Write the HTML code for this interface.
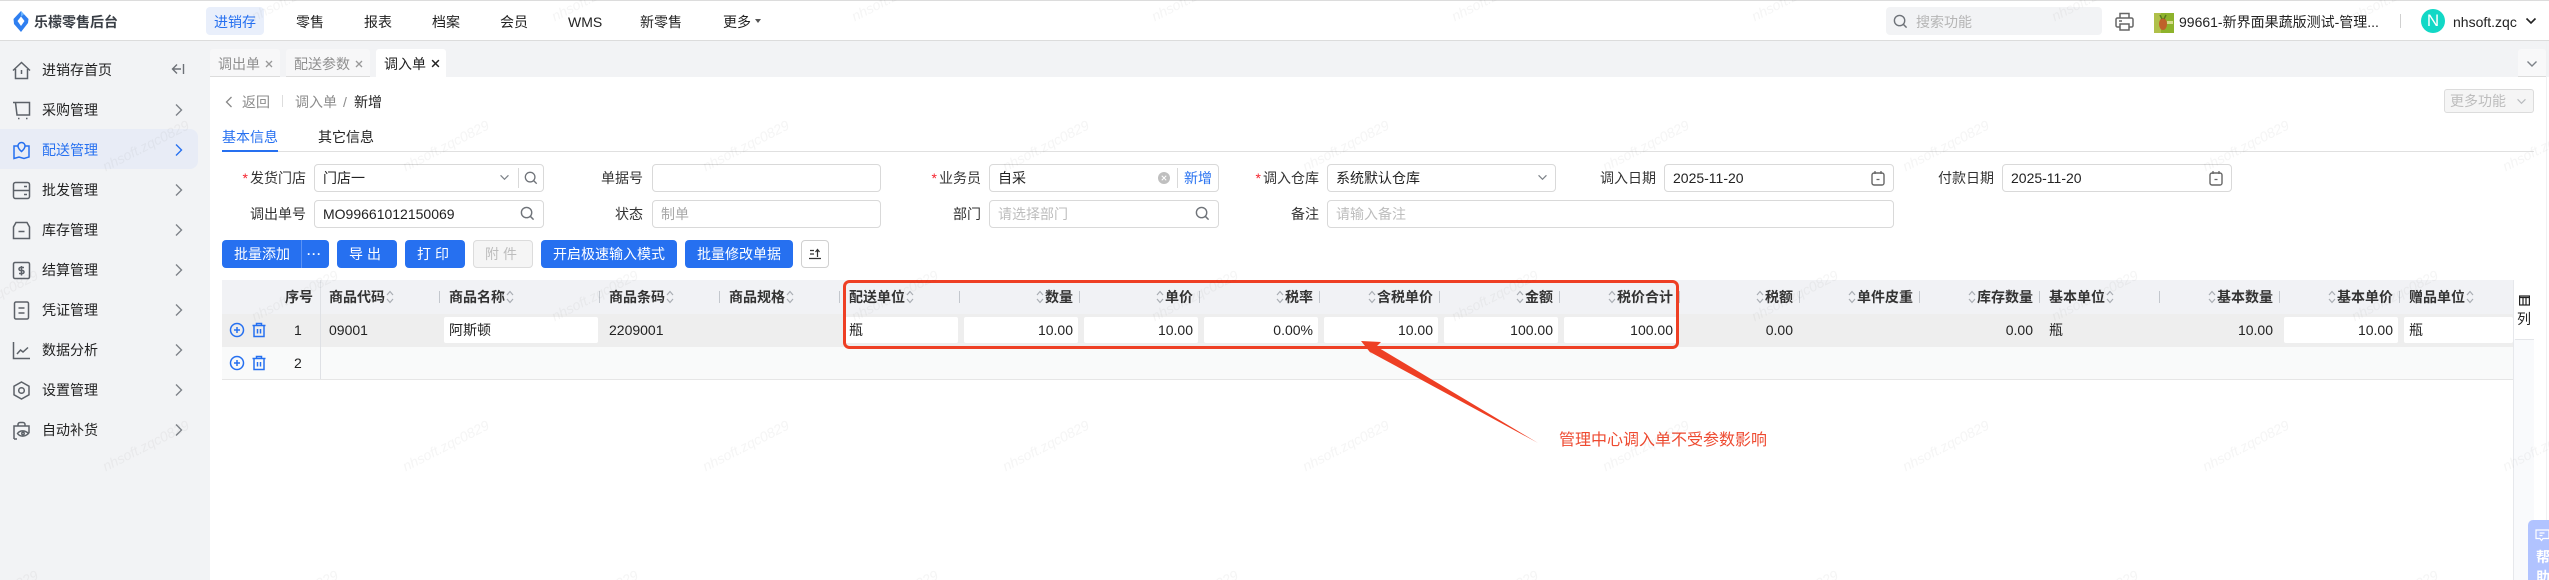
<!DOCTYPE html>
<html lang="zh-CN">
<head>
<meta charset="utf-8">
<title>调入单</title>
<style>
*{box-sizing:border-box}
html,body{margin:0;padding:0;width:2549px;height:580px;overflow:hidden;background:#fff}
body{position:relative;font:14px/20px "Liberation Sans","Noto Sans CJK SC",sans-serif;color:#222}
.a{position:absolute}
.t{position:absolute;white-space:nowrap;line-height:20px}
.g{color:#8c8c8c}
.inp{position:absolute;height:28px;border:1px solid #d9d9d9;border-radius:4px;background:#fff;padding-left:8px;line-height:26px;white-space:nowrap}
.ph{color:#bdbdbd}
.lb{position:absolute;line-height:20px;text-align:right;white-space:nowrap;color:#333}
.lb i{color:#f5222d;font-style:normal;margin-right:2px}
.btn{position:absolute;top:240px;height:28px;border-radius:4px;background:#2670f0;color:#fff;line-height:28px;text-align:center;white-space:nowrap}
.tab{position:absolute;top:49px;height:28px;background:#f7f7f8;border-bottom:1px solid #dcdcdc;border-radius:3px 3px 0 0}
.h{position:absolute;top:280px;height:34px;width:120px;display:flex;align-items:center;font-weight:bold;color:#333;white-space:nowrap;padding:0 7px 0 9px}
.h.r{justify-content:flex-end}
.h:after{content:"";position:absolute;right:0;top:11px;height:12px;width:1px;background:#c3c7cd}
.h.n:after{display:none}
.h svg{flex:none;margin:0 1px}
.c{position:absolute;top:314px;height:33px;width:120px;line-height:33px;padding:0 7px 0 9px;white-space:nowrap;color:#222}
.c.r{text-align:right}
.ci{position:absolute;top:317px;height:26px;background:#fff;border-radius:2px;line-height:26px;padding:0 5px;white-space:nowrap}
.ci.r{text-align:right}
.si{position:absolute;left:12px;width:19px;height:19px;fill:none;stroke:#5c6168;stroke-width:1.5}
.mt{position:absolute;left:42px;line-height:20px;color:#222;white-space:nowrap}
.ch{position:absolute;left:174px;width:9px;height:14px;fill:none;stroke:#7d8288;stroke-width:1.4}
</style>
</head>
<body>
<svg width="0" height="0" style="position:absolute">
<defs>
<symbol id="s" viewBox="0 0 8 14"><path d="M1 5 4 1.500 7 5M1 9 4 12.500 7 9" fill="none" stroke="#a9adb3" stroke-width="1.200"/></symbol>
<symbol id="q" viewBox="0 0 16 16"><circle cx="7" cy="7" r="5.500" fill="none" stroke="#6f7379" stroke-width="1.500"/><path d="M11 11 14.500 14.500" stroke="#6f7379" stroke-width="1.600"/></symbol>
<symbol id="d" viewBox="0 0 12 8"><path d="M1.500 1.500 6 6 10.500 1.500" fill="none" stroke="#7d8288" stroke-width="1.400"/></symbol>
<symbol id="dk" viewBox="0 0 12 8"><path d="M1.500 1.500 6 6 10.500 1.500" fill="none" stroke="#222" stroke-width="1.600"/></symbol>
<symbol id="cal" viewBox="0 0 14 16"><rect x="1" y="3" width="12" height="12" rx="2" fill="none" stroke="#666" stroke-width="1.400"/><path d="M4 1v3M10 1v3M5.500 9.500h3" stroke="#666" stroke-width="1.300" fill="none"/></symbol>
<symbol id="plus" viewBox="0 0 16 16"><circle cx="8" cy="8" r="6.500" fill="none" stroke="#2670f0" stroke-width="1.500"/><path d="M5 8h6M8 5v6" stroke="#2670f0" stroke-width="1.500"/></symbol>
<symbol id="tr" viewBox="0 0 16 16"><path d="M1.500 3.500h13M5.500 3.500V1.500h5v2M3 3.500v11h10v-11M6.500 7v4.500M9.500 7v4.500" fill="none" stroke="#2670f0" stroke-width="1.500"/></symbol>
<symbol id="cr" viewBox="0 0 9 14"><path d="M2 1.500 7.500 7 2 12.500"/></symbol>
<symbol id="x" viewBox="0 0 8 8"><path d="M1 1 7 7M7 1 1 7" stroke="currentColor" stroke-width="1.300" fill="none"/></symbol>
</defs>
</svg>

<!-- header -->
<div class="a" style="left:0;top:0;width:2549px;height:1px;background:#dcdcdc"></div>
<div class="a" style="left:0;top:40px;width:2549px;height:1px;background:#dcdcdc"></div>
<svg class="a" style="left:13px;top:11px" width="16" height="21" viewBox="0 0 16 21"><path d="M8 0 15.500 8 15 12 8 21 1 13 .5 8Z" fill="#2f7ff0"/><path d="M8 5.500 11.500 10 8 15 4.500 10Z" fill="#fff"/><path d="M8 0 11 3.500 8 5.500Z" fill="#68b4ff"/></svg>
<div class="t" style="left:34px;top:12px;font-weight:bold;color:#3a3f46">乐檬零售后台</div>
<div class="a" style="left:206px;top:7px;width:58px;height:28px;background:#e9effb;border-radius:4px"></div>
<div class="t" style="left:214px;top:12px;color:#2670f0">进销存</div>
<div class="t" style="left:296px;top:12px">零售</div>
<div class="t" style="left:364px;top:12px">报表</div>
<div class="t" style="left:432px;top:12px">档案</div>
<div class="t" style="left:500px;top:12px">会员</div>
<div class="t" style="left:568px;top:12px">WMS</div>
<div class="t" style="left:640px;top:12px">新零售</div>
<div class="t" style="left:723px;top:12px">更多</div>
<div class="a" style="left:755px;top:19px;border:3.500px solid transparent;border-top:4px solid #555;border-bottom:0"></div>

<div class="a" style="left:1886px;top:7px;width:216px;height:28px;background:#f2f3f5;border-radius:4px"></div>
<svg class="a" style="left:1893px;top:14px" width="15" height="15"><use href="#q"/></svg>
<div class="t ph" style="left:1916px;top:12px;color:#b5b5b5">搜索功能</div>
<svg class="a" style="left:2115px;top:12px" width="19" height="19" viewBox="0 0 19 19" fill="none" stroke="#666" stroke-width="1.500"><path d="M5 6V1.500h9V6M5 15H2.500A1.500 1.500 0 0 1 1 13.500V7.500A1.500 1.500 0 0 1 2.500 6h14A1.500 1.500 0 0 1 18 7.500v6a1.500 1.500 0 0 1-1.500 1.500H14"/><path d="M5 12h9v6H5zM4 9h3"/></svg>
<svg class="a" style="left:2154px;top:13px" width="20" height="20" viewBox="0 0 20 20"><rect width="20" height="20" fill="#8eb32c"/><rect x="0" y="0" width="7" height="20" fill="#b0c04a"/><ellipse cx="9" cy="11" rx="4" ry="6" fill="#c0622a"/><path d="M6 2 8 6M12 2 10 6" stroke="#5a7a20" stroke-width="1.500"/><rect x="13" y="8" width="6" height="3" fill="#d5dc8a"/></svg>
<div class="t" style="left:2179px;top:12px;color:#222">99661-新界面果蔬版测试-管理...</div>
<div class="a" style="left:2400px;top:14px;width:1px;height:14px;background:#d0d0d0"></div>
<div class="a" style="left:2421px;top:9px;width:24px;height:24px;border-radius:50%;background:#12d8c6;color:#fff;text-align:center;line-height:24px;font-size:17px">N</div>
<div class="t" style="left:2453px;top:12px;color:#222">nhsoft.zqc</div>
<svg class="a" style="left:2525px;top:17px" width="12" height="8"><use href="#dk"/></svg>

<!-- sidebar -->
<div class="a" style="left:0;top:41px;width:210px;height:539px;background:#f2f3f5"></div>
<div class="a" style="left:0;top:129px;width:198px;height:40px;background:#e8ecf6;border-radius:0 8px 8px 0"></div>

<svg class="si" style="top:61px" viewBox="0 0 19 19"><path d="M1 9.500 9.500 1.500 18 9.500M3.500 8V17.500H15.500V8M9.500 9v4"/></svg>
<div class="mt" style="top:60px">进销存首页</div>
<svg class="a" style="left:171px;top:63px" width="14" height="12" viewBox="0 0 14 12" fill="none" stroke="#6d7177" stroke-width="1.400"><path d="M12.500 1V11M10 6H1.500M6 1.500 1.500 6 6 10.500"/></svg>

<svg class="si" style="top:101px" viewBox="0 0 19 19"><path d="M1 1.500H17.500V14H5L3.500 1.500M6 17.500h1.500M14 17.500h1.500"/></svg>
<div class="mt" style="top:100px">采购管理</div>
<svg class="ch" style="top:103px"><use href="#cr"/></svg>

<svg class="si" style="top:141px;stroke:#2670f0" viewBox="0 0 19 19"><path d="M6 5H2V17.500L7 16 12 17.500 17 16V5H13M9.500 1.500A3.500 3.500 0 0 0 6 5C6 7.500 9.500 10.500 9.500 10.500S13 7.500 13 5A3.500 3.500 0 0 0 9.500 1.500Z"/></svg>
<div class="mt" style="top:140px;color:#2670f0">配送管理</div>
<svg class="ch" style="top:143px;stroke:#2670f0"><use href="#cr"/></svg>

<svg class="si" style="top:181px" viewBox="0 0 19 19"><rect x="1.500" y="1.500" width="16" height="16" rx="2"/><path d="M1.500 9.500h16M12 5.500h3M12 13.500h3"/></svg>
<div class="mt" style="top:180px">批发管理</div>
<svg class="ch" style="top:183px"><use href="#cr"/></svg>

<svg class="si" style="top:221px" viewBox="0 0 19 19"><path d="M4 1.500H15L17.500 6V17.500H1.500V6ZM6.500 10.500h6"/></svg>
<div class="mt" style="top:220px">库存管理</div>
<svg class="ch" style="top:223px"><use href="#cr"/></svg>

<svg class="si" style="top:261px" viewBox="0 0 19 19"><rect x="1.500" y="1.500" width="16" height="16" rx="1.500"/><path d="M12 6.500H8.500A1.500 1.500 0 0 0 8.500 9.500h2A1.500 1.500 0 0 1 10.500 12.500H7M9.500 5v9.500"/></svg>
<div class="mt" style="top:260px">结算管理</div>
<svg class="ch" style="top:263px"><use href="#cr"/></svg>

<svg class="si" style="top:301px" viewBox="0 0 19 19"><rect x="2.500" y="1" width="14" height="17" rx="1.500"/><path d="M6.500 7h6M6.500 12h6"/></svg>
<div class="mt" style="top:300px">凭证管理</div>
<svg class="ch" style="top:303px"><use href="#cr"/></svg>

<svg class="si" style="top:341px" viewBox="0 0 19 19"><path d="M1.500 1V17.500H18M5 13 8.500 9 11 11 16 6.500"/></svg>
<div class="mt" style="top:340px">数据分析</div>
<svg class="ch" style="top:343px"><use href="#cr"/></svg>

<svg class="si" style="top:381px" viewBox="0 0 19 19"><path d="M9.500 1 17 5.200V13.800L9.500 18 2 13.800V5.200Z"/><circle cx="9.500" cy="9.500" r="2.800"/></svg>
<div class="mt" style="top:380px">设置管理</div>
<svg class="ch" style="top:383px"><use href="#cr"/></svg>

<svg class="si" style="top:421px" viewBox="0 0 19 19"><path d="M6 5V3.500A2 2 0 0 1 8 1.500H11A2 2 0 0 1 13 3.500V5M2 18V5H17V12M5 18H2"/><path d="M5.500 12.500C8 9 13 9 16.500 12.500 13 16 8 16 5.500 12.500Z"/><circle cx="11" cy="12.500" r="1.200"/></svg>
<div class="mt" style="top:420px">自动补货</div>
<svg class="ch" style="top:423px"><use href="#cr"/></svg>

<!-- tab band -->
<div class="a" style="left:210px;top:41px;width:2339px;height:36px;background:#f2f3f5"></div>
<div class="tab" style="left:210px;width:70px"></div>
<div class="t" style="left:218px;top:54px;color:#8f8f8f">调出单</div>
<svg class="a" style="left:265px;top:60px;color:#999" width="8" height="8"><use href="#x"/></svg>
<div class="tab" style="left:286px;width:84px"></div>
<div class="t" style="left:294px;top:54px;color:#8f8f8f">配送参数</div>
<svg class="a" style="left:355px;top:60px;color:#999" width="8" height="8"><use href="#x"/></svg>
<div class="tab" style="left:376px;width:70px;background:#fff;border:0"></div>
<div class="t" style="left:384px;top:54px;color:#222">调入单</div>
<svg class="a" style="left:431px;top:59px;color:#222" width="9" height="9"><use href="#x"/></svg>
<div class="tab" style="left:2518px;width:28px;background:#f8f8f9"></div>
<svg class="a" style="left:2526px;top:60px" width="12" height="8"><use href="#d"/></svg>

<!-- breadcrumb -->
<svg class="a" style="left:225px;top:96px" width="8" height="12" viewBox="0 0 8 12"><path d="M6.500 1 1.500 6 6.500 11" fill="none" stroke="#888" stroke-width="1.300"/></svg>
<div class="t g" style="left:242px;top:92px">返回</div>
<div class="a" style="left:282px;top:95px;width:1px;height:12px;background:#ddd"></div>
<div class="t g" style="left:295px;top:92px">调入单</div>
<div class="t g" style="left:343px;top:92px">/</div>
<div class="t" style="left:354px;top:92px;color:#222">新增</div>
<div class="a" style="left:2444px;top:89px;width:90px;height:24px;background:#f5f5f5;border:1px solid #dcdcdc;border-radius:3px"></div>
<div class="t" style="left:2450px;top:91px;color:#bdbdbd">更多功能</div>
<svg class="a" style="left:2516px;top:98px" width="11" height="7"><use href="#d" opacity=".5"/></svg>

<!-- tabs -->
<div class="t" style="left:222px;top:127px;color:#2670f0">基本信息</div>
<div class="t" style="left:318px;top:127px;color:#222">其它信息</div>
<div class="a" style="left:222px;top:151px;width:2312px;height:1px;background:#e0e0e0"></div>
<div class="a" style="left:222px;top:150px;width:56px;height:2px;background:#2670f0"></div>

<!-- form row 1 -->
<div class="lb" style="right:2243px;top:168px"><i>*</i>发货门店</div>
<div class="inp" style="left:314px;top:164px;width:230px">门店一</div>
<svg class="a" style="left:499px;top:174px" width="11" height="7"><use href="#d"/></svg>
<div class="a" style="left:518px;top:168px;width:1px;height:20px;background:#d9d9d9"></div>
<svg class="a" style="left:524px;top:171px" width="14" height="14"><use href="#q"/></svg>

<div class="lb" style="right:1906px;top:168px">单据号</div>
<div class="inp" style="left:652px;top:164px;width:229px"></div>

<div class="lb" style="right:1568px;top:168px"><i>*</i>业务员</div>
<div class="inp" style="left:989px;top:164px;width:230px">自采</div>
<div class="a" style="left:1158px;top:172px;width:12px;height:12px;border-radius:50%;background:#bfbfbf"></div>
<svg class="a" style="left:1161px;top:175px;color:#fff" width="6" height="6"><use href="#x"/></svg>
<div class="a" style="left:1177px;top:168px;width:1px;height:20px;background:#d9d9d9"></div>
<div class="t" style="left:1184px;top:168px;color:#2670f0">新增</div>

<div class="lb" style="right:1230px;top:168px"><i>*</i>调入仓库</div>
<div class="inp" style="left:1327px;top:164px;width:229px">系统默认仓库</div>
<svg class="a" style="left:1537px;top:174px" width="11" height="7"><use href="#d"/></svg>

<div class="lb" style="right:893px;top:168px">调入日期</div>
<div class="inp" style="left:1664px;top:164px;width:230px">2025-11-20</div>
<svg class="a" style="left:1871px;top:170px" width="14" height="16"><use href="#cal"/></svg>

<div class="lb" style="right:555px;top:168px">付款日期</div>
<div class="inp" style="left:2002px;top:164px;width:230px">2025-11-20</div>
<svg class="a" style="left:2209px;top:170px" width="14" height="16"><use href="#cal"/></svg>

<!-- form row 2 -->
<div class="lb" style="right:2243px;top:204px">调出单号</div>
<div class="inp" style="left:314px;top:200px;width:230px">MO99661012150069</div>
<svg class="a" style="left:520px;top:206px" width="15" height="15"><use href="#q"/></svg>

<div class="lb" style="right:1906px;top:204px">状态</div>
<div class="inp ph" style="left:652px;top:200px;width:229px;color:#a8a8a8">制单</div>

<div class="lb" style="right:1568px;top:204px">部门</div>
<div class="inp ph" style="left:989px;top:200px;width:230px">请选择部门</div>
<svg class="a" style="left:1195px;top:206px" width="15" height="15"><use href="#q"/></svg>

<div class="lb" style="right:1230px;top:204px">备注</div>
<div class="inp ph" style="left:1327px;top:200px;width:567px">请输入备注</div>

<!-- buttons -->
<div class="btn" style="left:222px;width:107px;text-align:left;padding-left:12px">批量添加</div>
<div class="a" style="left:301px;top:240px;width:1px;height:28px;background:#5b93f5"></div>
<div class="t" style="left:307px;top:244px;color:#fff;font-weight:bold;letter-spacing:1px;font-size:12px">···</div>
<div class="btn" style="left:337px;width:60px;letter-spacing:4px">导出</div>
<div class="btn" style="left:405px;width:60px;letter-spacing:4px">打印</div>
<div class="btn" style="left:473px;width:60px;letter-spacing:4px;background:#f5f5f5;border:1px solid #dcdcdc;color:#bdbdbd;line-height:26px">附件</div>
<div class="btn" style="left:541px;width:136px">开启极速输入模式</div>
<div class="btn" style="left:685px;width:108px">批量修改单据</div>
<div class="btn" style="left:801px;width:28px;background:#fff;border:1px solid #d0d0d0"></div>
<svg class="a" style="left:809px;top:248px" width="12" height="12" viewBox="0 0 12 12" fill="none" stroke="#333" stroke-width="1.200"><path d="M1 2.500h4M1 6h4M0 10.500h12M8.500 9V2M6.500 4 8.500 1.500 10.500 4"/></svg>

<!-- table -->
<div class="a" style="left:222px;top:280px;width:2291px;height:34px;background:#f1f2f5"></div>
<div class="a" style="left:222px;top:314px;width:2291px;height:33px;background:#eee"></div>
<div class="a" style="left:222px;top:347px;width:2291px;height:32px;background:#f9fafa"></div>
<div class="a" style="left:222px;top:379px;width:2291px;height:1px;background:#e6e6e6"></div>
<div class="a" style="left:320px;top:280px;width:1px;height:99px;background:#dfe1e5"></div>

<div class="t" style="left:285px;top:287px;font-weight:bold;color:#333">序号</div>
<div class="t" style="left:294px;top:320px">1</div>
<div class="t" style="left:294px;top:353px">2</div>
<svg class="a" style="left:229px;top:322px" width="16" height="16"><use href="#plus"/></svg>
<svg class="a" style="left:251px;top:322px" width="16" height="16"><use href="#tr"/></svg>
<svg class="a" style="left:229px;top:355px" width="16" height="16"><use href="#plus"/></svg>
<svg class="a" style="left:251px;top:355px" width="16" height="16"><use href="#tr"/></svg>

<div class="h" style="left:320px">商品代码<svg width="8" height="14"><use href="#s"/></svg></div>
<div class="h" style="left:440px;width:160px">商品名称<svg width="8" height="14"><use href="#s"/></svg></div>
<div class="h" style="left:600px">商品条码<svg width="8" height="14"><use href="#s"/></svg></div>
<div class="h" style="left:720px">商品规格<svg width="8" height="14"><use href="#s"/></svg></div>
<div class="h" style="left:840px">配送单位<svg width="8" height="14"><use href="#s"/></svg></div>
<div class="h r" style="left:960px"><svg width="8" height="14"><use href="#s"/></svg>数量</div>
<div class="h r" style="left:1080px"><svg width="8" height="14"><use href="#s"/></svg>单价</div>
<div class="h r" style="left:1200px"><svg width="8" height="14"><use href="#s"/></svg>税率</div>
<div class="h r" style="left:1320px"><svg width="8" height="14"><use href="#s"/></svg>含税单价</div>
<div class="h r" style="left:1440px"><svg width="8" height="14"><use href="#s"/></svg>金额</div>
<div class="h r" style="left:1560px"><svg width="8" height="14"><use href="#s"/></svg>税价合计</div>
<div class="h r" style="left:1680px"><svg width="8" height="14"><use href="#s"/></svg>税额</div>
<div class="h r" style="left:1800px"><svg width="8" height="14"><use href="#s"/></svg>单件皮重</div>
<div class="h r" style="left:1920px"><svg width="8" height="14"><use href="#s"/></svg>库存数量</div>
<div class="h" style="left:2040px">基本单位<svg width="8" height="14"><use href="#s"/></svg></div>
<div class="h r" style="left:2160px"><svg width="8" height="14"><use href="#s"/></svg>基本数量</div>
<div class="h r" style="left:2280px"><svg width="8" height="14"><use href="#s"/></svg>基本单价</div>
<div class="h n" style="left:2400px;width:113px">赠品单位<svg width="8" height="14"><use href="#s"/></svg></div>

<div class="c" style="left:320px">09001</div>
<div class="ci" style="left:444px;width:154px">阿斯顿</div>
<div class="c" style="left:600px">2209001</div>
<div class="ci" style="left:844px;width:114px">瓶</div>
<div class="ci r" style="left:964px;width:114px">10.00</div>
<div class="ci r" style="left:1084px;width:114px">10.00</div>
<div class="ci r" style="left:1204px;width:114px">0.00%</div>
<div class="ci r" style="left:1324px;width:114px">10.00</div>
<div class="ci r" style="left:1444px;width:114px">100.00</div>
<div class="ci r" style="left:1564px;width:114px">100.00</div>
<div class="c r" style="left:1680px">0.00</div>
<div class="c r" style="left:1920px">0.00</div>
<div class="c" style="left:2040px">瓶</div>
<div class="c r" style="left:2160px">10.00</div>
<div class="ci r" style="left:2284px;width:114px">10.00</div>
<div class="ci" style="left:2404px;width:109px">瓶</div>

<!-- right column panel -->
<div class="a" style="left:2513px;top:280px;width:21px;height:300px;background:#f9fafc;border-left:1px solid #e6e8ec"></div>
<div class="a" style="left:2514px;top:280px;width:20px;height:59px;background:#fff"></div>
<div class="a" style="left:2515px;top:339px;width:19px;height:1px;background:#e4e6ea"></div>
<svg class="a" style="left:2519px;top:295px" width="11" height="11" viewBox="0 0 11 11" fill="none" stroke="#222" stroke-width="1.200"><rect x=".6" y="1" width="9.800" height="9"/><path d="M.6 2.500h9.800M4 2v8M7 2v8"/></svg>
<div class="t" style="left:2517px;top:309px">列</div>
<div class="a" style="left:2546px;top:41px;width:1px;height:539px;background:#f0f1f3"></div>

<!-- help widget -->
<div class="a" style="left:2528px;top:520px;width:21px;height:60px;background:#b1c3ff;border-radius:5px 0 0 0;overflow:hidden">
<svg class="a" style="left:7px;top:9px" width="14" height="13" viewBox="0 0 14 13" fill="none" stroke="#fff" stroke-width="1.200"><path d="M1 1H14V9.500H8L6.500 11.500 5 9.500H1ZM4.500 4h5M4.500 6.500h3"/></svg>
<div class="t" style="left:8px;top:27px;color:#fff;font-weight:bold">帮</div>
<div class="t" style="left:8px;top:47px;color:#fff;font-weight:bold">助</div>
</div>

<!-- annotation -->
<svg class="a" style="left:0;top:0;pointer-events:none" width="2549" height="580">
<rect x="844.500" y="281.500" width="833" height="66" rx="5" fill="none" stroke="#ee3f24" stroke-width="3"/>
<polygon points="1361,341 1381,342 1376.500,346.500 1538,443 1370,352 1373,356" fill="#ee3f24"/>
</svg>
<div class="t" style="left:1559px;top:431px;font-size:16px;color:#ee4a30">管理中心调入单不受参数影响</div>

<!-- watermark -->
<svg class="a" style="left:0;top:0;pointer-events:none" width="2549" height="580">
<defs><pattern id="wm" x="0" y="0" width="300" height="300" patternUnits="userSpaceOnUse">
<g font-family="Liberation Sans, sans-serif" font-size="14" font-style="italic" fill="#000" fill-opacity=".04" text-anchor="middle">
<text transform="translate(148 150) rotate(-27)">nhsoft.zqc0829</text>
<text transform="translate(297 0) rotate(-27)">nhsoft.zqc0829</text>
<text transform="translate(297 300) rotate(-27)">nhsoft.zqc0829</text>
<text transform="translate(-3 0) rotate(-27)">nhsoft.zqc0829</text>
<text transform="translate(-3 300) rotate(-27)">nhsoft.zqc0829</text>
</g></pattern></defs>
<rect width="2549" height="580" fill="url(#wm)"/>
</svg>
</body>
</html>
